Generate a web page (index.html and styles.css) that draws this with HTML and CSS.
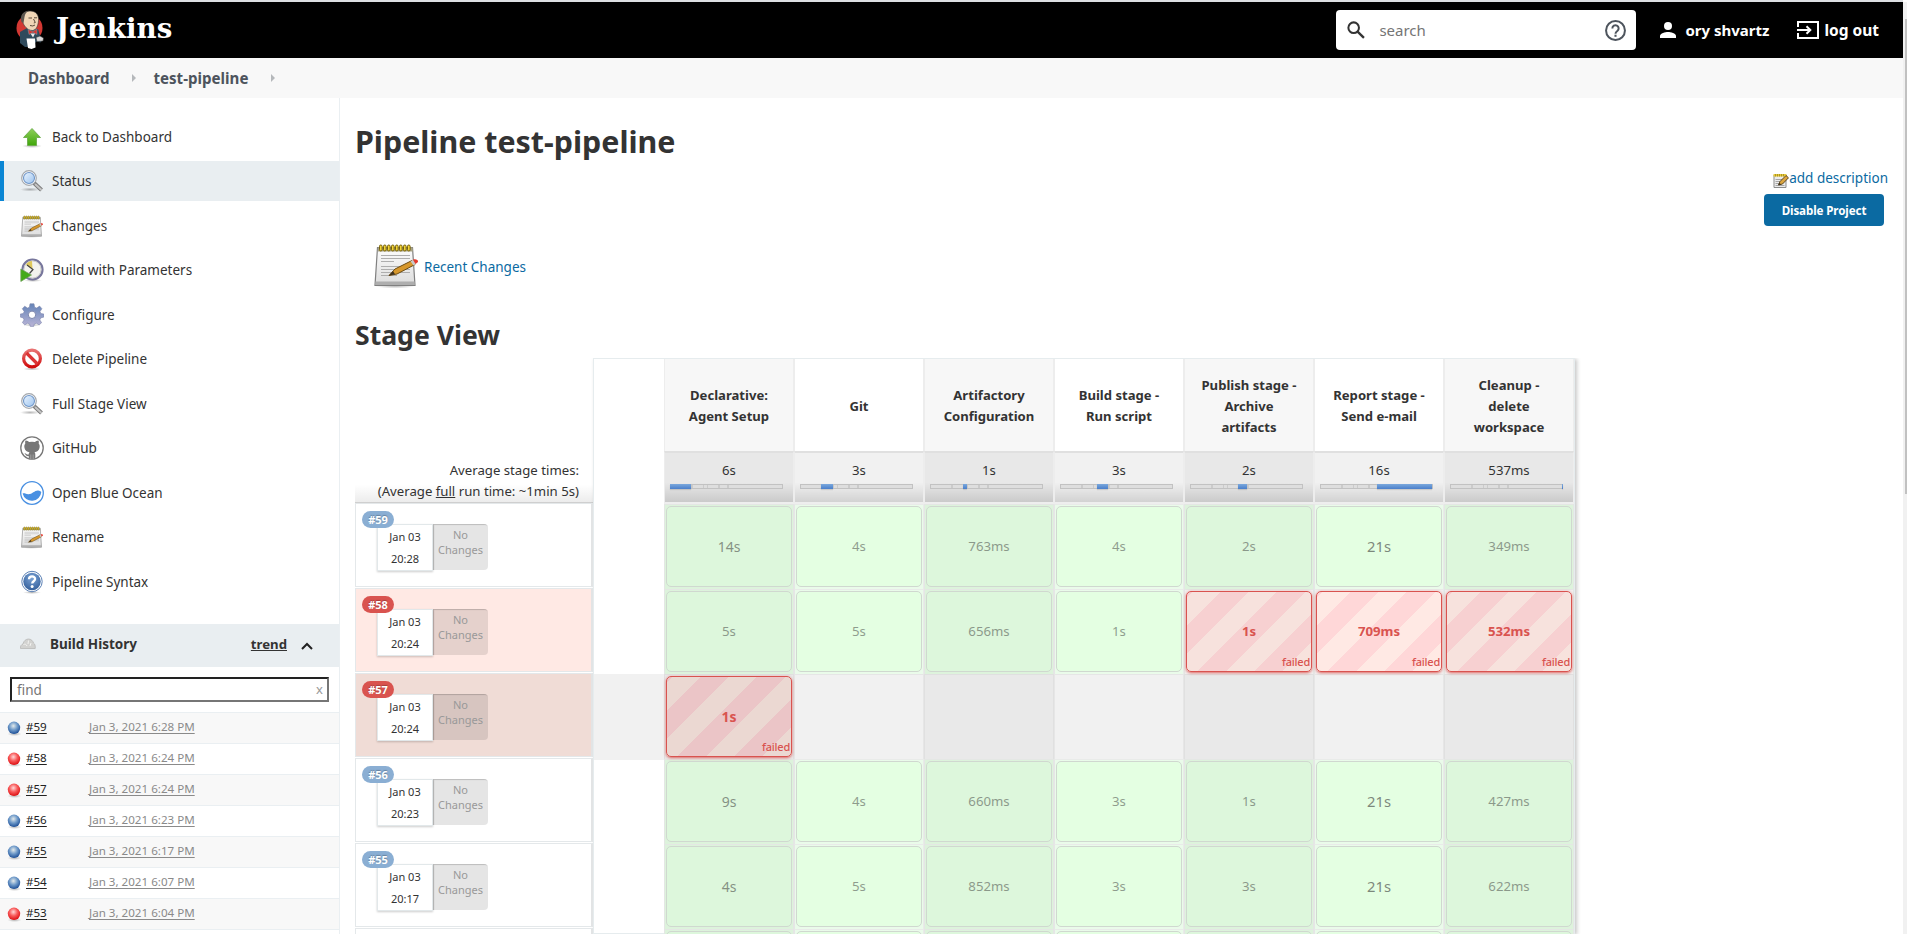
FILE: index.html
```html
<!DOCTYPE html>
<html lang="en">
<head>
<meta charset="utf-8">
<title>test-pipeline [Jenkins]</title>
<link rel="stylesheet" href="styles.css">
</head>
<body>
<svg class="defs" aria-hidden="true">
  <defs>
    <linearGradient id="g-green" x1="0" y1="0" x2="0" y2="1"><stop offset="0" stop-color="#8fd05a"/><stop offset="1" stop-color="#3fa60a"/></linearGradient>
    <linearGradient id="g-lens" x1="0" y1="0" x2="1" y2="1"><stop offset="0" stop-color="#eaf4ff"/><stop offset="1" stop-color="#9cc3ee"/></linearGradient>
    <linearGradient id="g-paper" x1="0" y1="0" x2="0" y2="1"><stop offset="0" stop-color="#fdfdfd"/><stop offset="1" stop-color="#dcdcdc"/></linearGradient>
    <linearGradient id="g-gear" x1="0" y1="0" x2="0" y2="1"><stop offset="0" stop-color="#6484b8"/><stop offset="1" stop-color="#b9b4d6"/></linearGradient>
    <linearGradient id="g-red" x1="0" y1="0" x2="0" y2="1"><stop offset="0" stop-color="#e87272"/><stop offset="1" stop-color="#d00c0c"/></linearGradient>
    <radialGradient id="g-shadow"><stop offset="0" stop-color="#000" stop-opacity=".28"/><stop offset="1" stop-color="#000" stop-opacity="0"/></radialGradient>
    <radialGradient id="g-help" cx=".5" cy=".3" r=".8"><stop offset="0" stop-color="#7ba3d6"/><stop offset="1" stop-color="#2b5794"/></radialGradient>
    <radialGradient id="g-bblue" cx=".45" cy=".35" r=".65"><stop offset="0" stop-color="#e4eaea"/><stop offset=".5" stop-color="#6f9ac9"/><stop offset="1" stop-color="#1d4f97"/></radialGradient>
    <radialGradient id="g-bred" cx=".45" cy=".35" r=".65"><stop offset="0" stop-color="#ffd8d8"/><stop offset=".5" stop-color="#f85a5a"/><stop offset="1" stop-color="#dd0f12"/></radialGradient>
    <symbol id="i-up" viewBox="0 0 24 24"><ellipse cx="12" cy="21" rx="10" ry="2" fill="url(#g-shadow)"/><path d="M12 3.500 20.500 12.500H16.500V20.500H7.500V12.500H3.500Z" fill="url(#g-green)" stroke="#6cab4c" stroke-width=".9"/></symbol>
    <symbol id="i-search" viewBox="0 0 24 24"><ellipse cx="10" cy="20.500" rx="10" ry="2" fill="url(#g-shadow)"/><path d="m14 14 7.500 7" stroke="#777" stroke-width="4"/><path d="m15 15 6.500 6" stroke="#c4c4c4" stroke-width="2.200"/><circle cx="9" cy="9" r="7.300" fill="#fff" stroke="#a4a8ad" stroke-width="1.200"/><circle cx="9" cy="9" r="5.500" fill="url(#g-lens)" stroke="#6f96c8" stroke-width="1.100"/></symbol>
    <symbol id="i-note" viewBox="0 0 48 48"><ellipse cx="23" cy="45" rx="20" ry="2.600" fill="url(#g-shadow)"/><path d="M5.500 6.500h35l2.500 38H3Z" fill="url(#g-paper)" stroke="#808080" stroke-width="1.200"/><path d="M6 6.500h34.500l.4 4H5.700Z" fill="#a9a487"/><path d="M3.500 40.500h39v3.500h-39Z" fill="#aeaeae"/><path d="M9 14.500h29M9 17.500h29M9 20.500h13M9 25.500h29M9 28.500h29M9 31.500h29M9 34.500h16" stroke="#aeaeae" stroke-width="1"/><g fill="#f2d435" stroke="#75600a" stroke-width="1"><rect x="7.500" y="4" width="2.600" height="6" rx="1.300"/><rect x="11.500" y="4" width="2.600" height="6" rx="1.300"/><rect x="15.500" y="4" width="2.600" height="6" rx="1.300"/><rect x="19.500" y="4" width="2.600" height="6" rx="1.300"/><rect x="23.500" y="4" width="2.600" height="6" rx="1.300"/><rect x="27.500" y="4" width="2.600" height="6" rx="1.300"/><rect x="31.500" y="4" width="2.600" height="6" rx="1.300"/><rect x="35.500" y="4" width="2.600" height="6" rx="1.300"/></g><path d="M17 34.500 23 28 40 19.500l3 4-18 9.500Z" fill="#d6972c" stroke="#6a4a12" stroke-width="1"/><path d="m17 34.500 4-4.500 2 3.200Z" fill="#3f321f"/><path d="m38.500 20.200 3-1.500 2.600 4-2.600 1.700Z" fill="#c9c9c9"/><path d="m41 18.700c2-1 5.500-.2 5 2.300l-2.500 2Z" fill="#e53a2e"/></symbol>
    <symbol id="i-edit" viewBox="0 0 16 16"><path d="M1 2h12v12.500H1Z" fill="#ececec" stroke="#8b8b8b"/><path d="M2.500 6.500h8M2.500 8.500h6M2.500 10.500h5M2.500 12.500h9" stroke="#a6a6a6"/><path d="M.5 1h13v2.500H.5Z" fill="#e7c83a"/><path d="M2.500 1v2.500M4.500 1v2.500M6.500 1v2.500M8.500 1v2.500M10.500 1v2.500" stroke="#a08a1c" stroke-width=".8"/><path d="m5.500 12 1.500-3.500L13 2.500l2.500 2.300L9.500 11Z" fill="#dda63f" stroke="#4e3a16" stroke-width=".9"/><path d="m5.500 12 .8-2L8 11.300Z" fill="#2d2416"/></symbol>
    <symbol id="i-clock" viewBox="0 0 24 24"><ellipse cx="13" cy="22.500" rx="9" ry="1.500" fill="url(#g-shadow)"/><circle cx="12.500" cy="11.500" r="10" fill="#f3f3ee" stroke="#77769c" stroke-width="2.200"/><circle cx="12.500" cy="11.500" r="8.600" fill="none" stroke="#c9c9c9"/><path d="M12.500 11.500 6 6.500a8 8 0 0 1 6-3.500Z" fill="#dfc95c"/><path d="m7 7 6 4.500-3.500 4" fill="none" stroke="#444" stroke-width="1.200"/><path d="M.8 11 11.500 17 .8 23.500Z" fill="#43aa18" stroke="#6e9f5a" stroke-width=".7"/></symbol>
    <symbol id="i-gear" viewBox="0 0 24 24"><ellipse cx="12" cy="22" rx="9" ry="1.700" fill="url(#g-shadow)"/><g fill="url(#g-gear)" stroke="#7d87ac" stroke-width=".6"><path d="M10 .8h4l.6 3.400 2.100.9L19.600 3.100l2.300 2.600-1.900 2.900.8 1.900 3.100.6v3l-3.200.8-.9 2 1.800 2.800-2.500 2.200-2.800-1.700-2 .8-.6 2.400h-3.400l-.7-2.400-2-.8-2.800 1.700-2.400-2.300 1.700-2.700-.9-2L.3 14.100v-3l3-.6.9-2L2.300 5.700l2.400-2.500 2.800 1.900 1.900-.9Z"/></g><circle cx="12" cy="11.800" r="3.700" fill="#fff" stroke="#7c86ad"/></symbol>
    <symbol id="i-stop" viewBox="0 0 24 24"><ellipse cx="12" cy="22" rx="9" ry="1.500" fill="url(#g-shadow)"/><circle cx="12" cy="11.500" r="8.400" fill="#fff" stroke="url(#g-red)" stroke-width="3.200"/><path d="m6.500 6 11 11" stroke="#db3535" stroke-width="3.200"/></symbol>
    <symbol id="i-github" viewBox="0 0 24 24"><circle cx="12" cy="12" r="11.200" fill="#fff" stroke="#777" stroke-width="1.300"/><path d="M5.500 4.500C7 4.300 8.500 5.500 9 6q3-.6 6 0c.7-.6 2-1.600 3.500-1.500.5 1.200.4 2.200.2 3 1 1.200 1.200 2.500.8 4.500-.6 2.800-2.500 3.800-5 4.200.7.7.8 1.400.8 2.500V22.500l-3.300.7-3.300-.7v-2.400c-3 .5-3-2.300-4.500-2.900 2.200-.4 2.300 1.800 4.500 1.300 0-.9.200-1.600.8-2.300C7 15.800 5.100 14.800 4.500 12c-.4-2-.2-3.300.8-4.500-.2-.8-.3-1.800.2-3Z" fill="#777"/><path d="M10.800 18.500v4.500M13.200 18.500v4.500" stroke="#bbb" stroke-width=".6"/></symbol>
    <symbol id="i-ocean" viewBox="0 0 24 24"><circle cx="12" cy="12" r="11.300" fill="#fff" stroke="#4990e2" stroke-width="1.300"/><path d="M2.600 12.500c2-.6 3.500.6 5.500.7 4 .3 6.500-3.900 10-3.700 1.500.1 2.500.8 3.200 1.500A9.500 9.500 0 0 1 2.600 12.500Z" fill="#4990e2"/></symbol>
    <symbol id="i-help" viewBox="0 0 24 24"><ellipse cx="12" cy="22.500" rx="9" ry="1.500" fill="url(#g-shadow)"/><circle cx="12" cy="11.500" r="10.200" fill="#fff" stroke="#5a80b5" stroke-width="1"/><circle cx="12" cy="11.500" r="8.700" fill="url(#g-help)"/><path d="M9 9.200c0-3.800 6.200-3.600 6.100-.2 0 2.200-2.900 2.300-2.900 4.500" fill="none" stroke="#fff" stroke-width="2.300"/><circle cx="12.100" cy="16.600" r="1.500" fill="#fff"/></symbol>
    <symbol id="i-blue" viewBox="0 0 16 16"><ellipse cx="8.500" cy="14" rx="7" ry="2" fill="url(#g-shadow)"/><circle cx="8" cy="7.800" r="6.200" fill="url(#g-bblue)"/></symbol>
    <symbol id="i-red" viewBox="0 0 16 16"><ellipse cx="8.500" cy="14" rx="7" ry="2" fill="url(#g-shadow)"/><circle cx="8" cy="7.800" r="6.200" fill="url(#g-bred)"/></symbol>
  </defs>
</svg>

<header class="header">
  <a class="brand">
    <svg class="butler" viewBox="0 0 28 40">
      <circle cx="13.500" cy="18" r="13" fill="#d33833"/>
      <path d="M4 22 11 18l11 1 2.500 8 2 3-2 2.500-4-1L15 37H9l-5-4Z" fill="#2f4a5c"/>
      <path d="M6 10C5 4 9 1 14 1c6 0 9 4 8.500 9.500-.3 5-2 9.500-6 10-5 0-9-4.500-10.500-10.500Z" fill="#f0d6b7" stroke="#333" stroke-width=".6"/>
      <path d="M5.500 12C3.500 6 7 .8 13 .8 10.500 2.300 9 3.500 8.500 7L7.500 13Z" fill="#5d564f"/>
      <path d="M12.500 8h3.500M18 7.800h3M17.500 9l1.800 3.500-1.500.5M14 15.500q3 1.200 5-.5" stroke="#4a3b2d" stroke-width=".9" fill="none"/>
      <path d="m12 19.500 5 2 4-2.500v5.500L17 22.500l-4 2Z" fill="#d33833" stroke="#81b0c4" stroke-width=".4"/><path d="m14.500 23.500 2.500 4 2-4Z" fill="#eee"/>
      <path d="M10.500 28.500h8.500l.5 9-4 1.500-3.500-1Z" fill="#fff"/><path d="M20 27.500l4-1.500 3.500 2-.5 3-6 .5Z" fill="#d8d8d8" stroke="#333" stroke-width=".5"/>
    </svg>
    <span class="brand-name">Jenkins</span>
  </a>
  <div class="searchbox">
    <svg class="s-ico" viewBox="0 0 17 17"><circle cx="6.300" cy="6.300" r="5" fill="none" stroke="#333" stroke-width="1.900"/><path d="m10 10 6 6" stroke="#333" stroke-width="2.200"/></svg>
    <span class="s-text">search</span>
    <svg class="s-help" viewBox="0 0 20 20"><circle cx="10" cy="10" r="9" fill="none" stroke="#4d545d" stroke-width="1.900"/><path d="M7 8a3 3 0 1 1 4.800 2.400C10.800 11.100 10 11.600 10 13" fill="none" stroke="#4d545d" stroke-width="1.900"/><path d="M9 14h2v2H9Z" fill="#4d545d"/></svg>
  </div>
  <a class="user"><svg viewBox="0 0 16 16"><circle cx="8" cy="4" r="4" fill="#fff"/><path d="M0 16v-2c0-2.700 5.300-4 8-4s8 1.300 8 4v2Z" fill="#fff"/></svg><span>ory shvartz</span></a>
  <a class="logout"><svg viewBox="0 0 22 18"><path d="M1 6V1h20v16H1v-5" fill="none" stroke="#fff" stroke-width="2"/><path d="M0 9h13M9.500 5.300 13.300 9l-3.800 3.700" fill="none" stroke="#fff" stroke-width="2"/></svg><span>log out</span></a>
</header>

<nav class="crumbs"><a>Dashboard</a><i></i><a>test-pipeline</a><i></i></nav>

<div class="body">
  <aside class="side">
    <ul class="tasks">
      <li><svg><use href="#i-up"/></svg><span>Back to Dashboard</span></li>
      <li class="active"><svg><use href="#i-search"/></svg><span>Status</span></li>
      <li><svg><use href="#i-note"/></svg><span>Changes</span></li>
      <li><svg><use href="#i-clock"/></svg><span>Build with Parameters</span></li>
      <li><svg><use href="#i-gear"/></svg><span>Configure</span></li>
      <li><svg><use href="#i-stop"/></svg><span>Delete Pipeline</span></li>
      <li><svg><use href="#i-search"/></svg><span>Full Stage View</span></li>
      <li><svg><use href="#i-github"/></svg><span>GitHub</span></li>
      <li><svg><use href="#i-ocean"/></svg><span>Open Blue Ocean</span></li>
      <li><svg><use href="#i-note"/></svg><span>Rename</span></li>
      <li><svg><use href="#i-help"/></svg><span>Pipeline Syntax</span></li>
    </ul>
    <div class="bh-head">
      <svg class="bh-ico" viewBox="0 0 16 12"><path d="M.5 10.500C0 8 1.500 6.500 3 6 3.500 3 6 1 8.500 1S13 3 13.500 5c1.500 1 2 3 1.700 5.500Z" fill="#d2d2d0" stroke="#b9b9b7" stroke-width=".8"/><path d="M3.500 6.500c1.500-.8 3 0 3.500 1.500M8.500 2.500 8 6M11 5l-1 3" fill="none" stroke="#f4f4f2"/></svg>
      <b>Build History</b><a>trend</a>
      <svg class="bh-up" viewBox="0 0 12 8"><path d="m1 7 5-5 5 5" fill="none" stroke="#222" stroke-width="2"/></svg>
    </div>
    <div class="find"><span>find</span><em>x</em></div>
    <ul class="builds">
      <li><svg><use href="#i-blue"/></svg><a class="n">#59</a><a class="d">Jan 3, 2021 6:28 PM</a></li>
      <li><svg><use href="#i-red"/></svg><a class="n">#58</a><a class="d">Jan 3, 2021 6:24 PM</a></li>
      <li><svg><use href="#i-red"/></svg><a class="n">#57</a><a class="d">Jan 3, 2021 6:24 PM</a></li>
      <li><svg><use href="#i-blue"/></svg><a class="n">#56</a><a class="d">Jan 3, 2021 6:23 PM</a></li>
      <li><svg><use href="#i-blue"/></svg><a class="n">#55</a><a class="d">Jan 3, 2021 6:17 PM</a></li>
      <li><svg><use href="#i-blue"/></svg><a class="n">#54</a><a class="d">Jan 3, 2021 6:07 PM</a></li>
      <li><svg><use href="#i-red"/></svg><a class="n">#53</a><a class="d">Jan 3, 2021 6:04 PM</a></li>
      <li></li>
    </ul>
  </aside>

  <main class="main">
    <h1><span>Pipeline test-pipeline</span></h1>
    <div class="desc">
      <a class="add"><svg><use href="#i-edit"/></svg><span>add description</span></a>
      <button class="disable"><span>Disable Project</span></button>
    </div>
    <a class="recent"><svg><use href="#i-note"/></svg><span>Recent Changes</span></a>
    <h2><span>Stage View</span></h2>

    <div class="sv">
      <div class="runs">
        <div class="avg"><span>Average stage times:</span><span>(Average <u>full</u> run time: ~1min 5s)</span></div>
        <div class="run"><span class="badge">#59</span><div class="when"><span>Jan 03</span><span>20:28</span></div><div class="chg"><span>No</span><span>Changes</span></div></div>
        <div class="run bad"><span class="badge">#58</span><div class="when"><span>Jan 03</span><span>20:24</span></div><div class="chg"><span>No</span><span>Changes</span></div></div>
        <div class="run worse"><span class="badge">#57</span><div class="when"><span>Jan 03</span><span>20:24</span></div><div class="chg"><span>No</span><span>Changes</span></div></div>
        <div class="run"><span class="badge">#56</span><div class="when"><span>Jan 03</span><span>20:23</span></div><div class="chg"><span>No</span><span>Changes</span></div></div>
        <div class="run"><span class="badge">#55</span><div class="when"><span>Jan 03</span><span>20:17</span></div><div class="chg"><span>No</span><span>Changes</span></div></div>
        <div class="run"></div>
      </div>
      <div class="grid">
        <div class="row names"><div class="pad"></div><div class="th"><span>Declarative:</span><span>Agent Setup</span></div><div class="th"><span>Git</span></div><div class="th"><span>Artifactory</span><span>Configuration</span></div><div class="th"><span>Build stage -</span><span>Run script</span></div><div class="th"><span>Publish stage -</span><span>Archive</span><span>artifacts</span></div><div class="th"><span>Report stage -</span><span>Send e-mail</span></div><div class="th"><span>Cleanup -</span><span>delete</span><span>workspace</span></div></div>
        <div class="row times"><div class="pad"></div>
          <div class="tt"><span>6s</span><div class="bar"><i style="left:0;width:21px"></i></div></div>
          <div class="tt"><span>3s</span><div class="bar"><i style="left:21px;width:12px"></i></div></div>
          <div class="tt"><span>1s</span><div class="bar"><i style="left:33px;width:4px"></i></div></div>
          <div class="tt"><span>3s</span><div class="bar"><i style="left:37px;width:11px"></i></div></div>
          <div class="tt"><span>2s</span><div class="bar"><i style="left:48px;width:9px"></i></div></div>
          <div class="tt"><span>16s</span><div class="bar"><i style="left:57px;width:55px"></i></div></div>
          <div class="tt"><span>537ms</span><div class="bar"><i style="left:112px;width:1px"></i></div></div>
        </div>
        <div class="row"><div class="pad"></div><div class="td"><div class="ok l"><span>14s</span></div></div><div class="td"><div class="ok"><span>4s</span></div></div><div class="td"><div class="ok"><span>763ms</span></div></div><div class="td"><div class="ok"><span>4s</span></div></div><div class="td"><div class="ok"><span>2s</span></div></div><div class="td"><div class="ok xl"><span>21s</span></div></div><div class="td"><div class="ok"><span>349ms</span></div></div></div>
        <div class="row"><div class="pad"></div><div class="td"><div class="ok"><span>5s</span></div></div><div class="td"><div class="ok"><span>5s</span></div></div><div class="td"><div class="ok"><span>656ms</span></div></div><div class="td"><div class="ok"><span>1s</span></div></div><div class="td"><div class="fail"><span>1s</span><em>failed</em></div></div><div class="td"><div class="fail"><span>709ms</span><em>failed</em></div></div><div class="td"><div class="fail"><span>532ms</span><em>failed</em></div></div></div>
        <div class="row off"><div class="pad"></div><div class="td"><div class="fail l"><span>1s</span><em>failed</em></div></div><div class="td"></div><div class="td"></div><div class="td"></div><div class="td"></div><div class="td"></div><div class="td"></div></div>
        <div class="row"><div class="pad"></div><div class="td"><div class="ok l"><span>9s</span></div></div><div class="td"><div class="ok"><span>4s</span></div></div><div class="td"><div class="ok"><span>660ms</span></div></div><div class="td"><div class="ok"><span>3s</span></div></div><div class="td"><div class="ok"><span>1s</span></div></div><div class="td"><div class="ok xl"><span>21s</span></div></div><div class="td"><div class="ok"><span>427ms</span></div></div></div>
        <div class="row"><div class="pad"></div><div class="td"><div class="ok l"><span>4s</span></div></div><div class="td"><div class="ok"><span>5s</span></div></div><div class="td"><div class="ok"><span>852ms</span></div></div><div class="td"><div class="ok"><span>3s</span></div></div><div class="td"><div class="ok"><span>3s</span></div></div><div class="td"><div class="ok xl"><span>21s</span></div></div><div class="td"><div class="ok"><span>622ms</span></div></div></div>
        <div class="row"><div class="pad"></div><div class="td"><div class="ok"></div></div><div class="td"><div class="ok"></div></div><div class="td"><div class="ok"></div></div><div class="td"><div class="ok"></div></div><div class="td"><div class="ok"></div></div><div class="td"><div class="ok"></div></div><div class="td"><div class="ok"></div></div></div>
      </div>
    </div>
  </main>
</div>
<div class="scroll"><div class="thumb"></div></div>
</body>
</html>
```
FILE: styles.css
```css
* { box-sizing: border-box; }
html, body { height: 934px; overflow: hidden; }
body { margin: 0; padding-right: 4px; background: #fff; color: #333; font: 13.5px/21px "Noto Sans", "Open Sans", sans-serif; position: relative; }
ul { list-style: none; margin: 0; padding: 0; }
span, a { white-space: nowrap; }
svg { display: block; flex: none; }
.defs { position: absolute; width: 0; height: 0; }

.header { height: 58px; background: #000; border-top: 2px solid #dcdfe2; display: flex; align-items: center; color: #fff; }
.brand { display: flex; align-items: center; padding-left: 16px; }
.butler { width: 28px; height: 40px; }
.brand-name { font: bold 27.700px/40px "DejaVu Serif", serif; margin: -2px 0 0 12px; }
.searchbox { margin-left: auto; width: 300px; height: 40px; background: #fff; border-radius: 4px; display: flex; align-items: center; padding: 0 10px 0 11px; }
.s-ico { width: 18px; height: 18px; }
.s-text { color: #757575; font-size: 15px; margin-left: 14px; flex: 1; }
.s-help { width: 21px; height: 21px; }
.user, .logout { display: flex; align-items: center; font-weight: bold; font-size: 15px; }
.user { margin-left: 24px; gap: 9px; }
.user svg { width: 16px; height: 16px; }
.logout { margin: 0 24px 0 28px; gap: 5px; font-size: 15.500px; }
.logout svg { width: 22px; height: 18px; }

.crumbs { height: 40px; background: #f8f8f8; display: flex; align-items: center; padding: 1px 0 0 28px; font-weight: bold; font-size: 15.100px; color: #4d545d; }
.crumbs i { border-left: 4px solid #b5b8bb; border-top: 4px solid transparent; border-bottom: 4px solid transparent; margin: -1px 17px 1px 23px; }

.body { display: flex; height: 836px; }
.side { width: 340px; border-right: 1px solid #eaeff2; flex: none; overflow: hidden; }
.tasks { padding-top: 18.500px; height: 526px; display: flex; flex-direction: column; gap: 4.500px; }
.tasks li { height: 40px; display: flex; align-items: center; padding-left: 20px; gap: 8px; flex: none; }
.tasks li span { margin-top: 1px; }
.tasks li svg { width: 24px; height: 24px; }
.tasks .active { background: #e9eef1; border-left: 4px solid #0b86d4; padding-left: 16px; }
.bh-head { height: 43px; background: #e9eef1; display: flex; align-items: center; padding: 0 26px 3px 20px; }
.bh-ico { width: 16px; height: 12px; margin-right: 14px; }
.bh-head a { font-size: 13.200px; font-weight: bold; text-decoration: underline; margin-left: auto; margin-right: 14px; }
.bh-up { width: 12px; height: 8px; margin-top: 3px; }
.find { margin: 10px 10px 10px; height: 25px; border: 2px solid #222; border-right-color: #767676; border-bottom-color: #767676; display: flex; justify-content: space-between; align-items: center; padding: 2px 4px 0 5px; color: #757575; }
.find em { font-style: normal; font-size: 13px; color: #999; margin-top: -2px; }
.builds { font-size: 11.600px; }
.builds li { height: 31px; border-top: 1px solid #eaeff2; display: flex; align-items: center; padding: 0 0 3px 6px; }
.builds li:nth-child(odd) { background: #f8f8f8; }
.builds svg { width: 16px; height: 16px; margin: 3px 4px 0 0; }
.builds a { text-decoration: underline; text-underline-offset: 2px; }
.n { width: 63px; color: #222; }
.d { color: #8a8a8a; }

.main { flex: 1; padding-left: 15px; }
h1, h2 { margin: 0; color: #333; font-weight: bold; }
h1 { font-size: 30.400px; line-height: 40px; padding-top: 24px; height: 71px; }
.desc { display: flex; flex-direction: column; align-items: flex-end; height: 73px; padding-right: 15px; }
.add { display: flex; align-items: center; color: #0b6aa2; height: 18px; }
.add svg { width: 16px; height: 16px; margin-top: 5px; }
.add span { margin-top: 1px; }
.disable { margin: 7px 4px 0 0; width: 120px; height: 32px; border: 0; border-radius: 4px; background: #0b6aa2; color: #fff; font: bold 11.600px "Noto Sans", sans-serif; letter-spacing: -.1px; }
.recent { display: flex; align-items: center; height: 48px; padding-left: 17px; color: #0b6aa2; gap: 4px; }
.recent svg { width: 48px; height: 48px; margin-top: -2px; }
.recent span { margin-top: 2px; }
h2 { font-size: 26.600px; line-height: 36px; padding-top: 27px; height: 68px; }

/* Stage view: run list on the left, stage table on the right */
.sv { display: flex; height: 576px; overflow: hidden; }
.runs { width: 238px; flex: none; }
.avg { height: 146px; margin-bottom: -1px; display: flex; flex-direction: column; align-items: flex-end; justify-content: flex-end; padding: 0 14px 0 0; border-bottom: 2px solid #cfcfcf; background: linear-gradient(#fff 88%, #ececec); font-size: 13.200px; }
.run { position: relative; height: 84px; margin-bottom: 1px; border: 1px solid #e4e8ea; border-right: 2px solid #e2e4e5; display: flex; align-items: flex-start; padding: 20px 0 0 21px; }
.bad { background: #ffe9e4; }
.worse { background: #f0dcd6; }
.badge { position: absolute; left: 6px; top: 7px; width: 32px; height: 17px; border-radius: 9px; background: #8aaed3; color: #fff; font: bold 11px/17px "Noto Sans", sans-serif; text-align: center; text-shadow: 0 -1px 1px rgba(0,0,0,.25); }
.bad .badge, .worse .badge { background: #d9534f; }
.when { width: 56px; height: 47px; background: #fff; border: 1px solid #e2e8ea; box-shadow: 0 1px 2px rgba(0,0,0,.2); font-size: 11px; line-height: 22px; display: flex; flex-direction: column; align-items: center; padding-top: .5px; }
.chg { width: 55px; height: 46px; background: rgba(0,0,0,.1); border-radius: 0 4px 4px 0; box-shadow: inset 1px 1px 1px rgba(0,0,0,.18); font-size: 11px; line-height: 15px; color: #999; display: flex; flex-direction: column; align-items: center; padding-top: 3px; }

.grid { width: 982px; border: 1px solid #e6ecee; box-shadow: 2px 1px 4px rgba(0,0,0,.22); flex: none; }
.row { display: grid; grid-template-columns: 70px repeat(7, 130px); height: 85px; }
.names { height: 92px; }
.times { height: 53px; }
.th, .tt { border-left: 1px solid #ededed; border-right: 1px solid #ededed; }
.th { display: flex; flex-direction: column; align-items: center; justify-content: center; font-weight: bold; font-size: 13.100px; padding-top: 2px; }
.th:nth-child(even) { background: #f7f7f7; }
.tt { background: linear-gradient(transparent 60%, rgba(0,0,0,.13)) #f1f1f1; border-top: 2px solid #e0e0e0; border-bottom: 2px solid #eee; font-size: 13.200px; display: flex; flex-direction: column; align-items: center; padding-top: 7px; }
.tt:nth-child(even) { background-color: #e8e8e8; }
.bar { position: relative; width: 113px; height: 5px; margin: 3px 5px 0 0; border: 1px solid #c2c2c2; background: linear-gradient(90deg, transparent 20px, #cbcbcb 20px 22px, transparent 22px 32px, #cbcbcb 32px 33px, transparent 33px 36px, #cbcbcb 36px 37px, transparent 37px 47px, #cbcbcb 47px 49px, transparent 49px 56px, #cbcbcb 56px 58px, transparent 58px) #dedede; }
.bar i { position: absolute; top: -1px; height: 5px; margin-left: -1px; background: linear-gradient(#7ba8dc, #4a7fcb); box-shadow: 0 1px 1px rgba(0,0,0,.12); }
.td { padding: 1px 1px 2px 1px; border: 1px solid #e9ebe9; border-left-color: #e6e6e6; background: #eafbea; }
.td:nth-child(even) { background: #ddf3dc; border-color: #e4e7e4; }
.td:has(.fail) { background: #f2efef; }
.ok, .fail { position: relative; width: 126px; height: 81px; border: 1px solid #d0d8d0; border-radius: 5px; background: #e4ffe2; display: flex; align-items: center; justify-content: center; font-size: 13.200px; }
.ok span { color: #333; opacity: .48; margin-top: -1px; }
.ok.l { font-size: 14px; }
.ok.l span { opacity: .52; }
.ok.xl { font-size: 14.800px; }
.ok.xl span { opacity: .58; }
.td:nth-child(even) .ok { background: #ddf7dc; }
.fail { border-color: #d9534f; color: #d9534f; font-weight: bold; box-shadow: 0 1px 3px rgba(217,83,79,.9); background: repeating-linear-gradient(-45deg, #ffe9e4 0 20px, #ffd7d8 20px 40px); }
.fail.l { font-size: 14px; }
.td:nth-child(even) .fail { background: repeating-linear-gradient(-45deg, #f7e2dd 0 20px, #f7d0d1 20px 40px); }
.off .td:nth-child(even) .fail { background: repeating-linear-gradient(-45deg, #ebd8d2 0 20px, #ebc5c7 20px 40px); }
.fail em { position: absolute; right: 1px; bottom: 1px; font: 500 11px/16px "Noto Sans", sans-serif; letter-spacing: -.2px; }
.off .td { background: #f1f1f1; border-color: #e6e6e6; }
.off .td:nth-child(even) { background: #e9e9e9; border-color: #e0e0e0; }
.off .pad { background: #f1f1f1; }

.scroll { position: absolute; right: 0; top: 2px; width: 4px; height: 932px; background: #f1f1f1; padding: 17px 0 0 2px; }
.thumb { width: 2px; height: 475px; background: #c1c1c1; }
```
